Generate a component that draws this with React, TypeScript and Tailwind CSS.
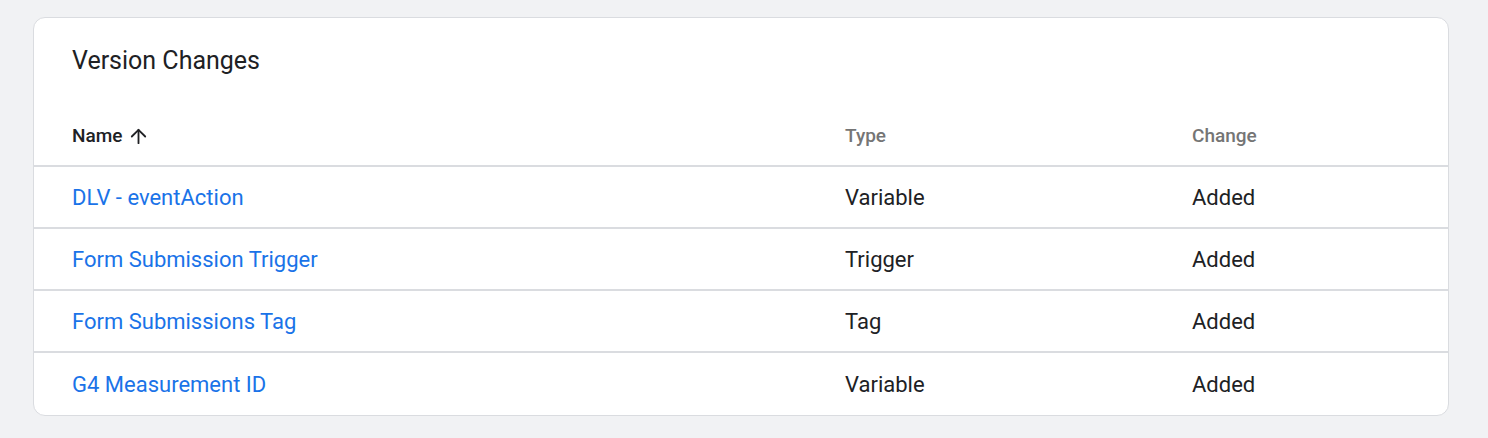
import { ArrowUp } from 'lucide-react'

const rows = [
  { name: 'DLV - eventAction', type: 'Variable', change: 'Added' },
  { name: 'Form Submission Trigger', type: 'Trigger', change: 'Added' },
  { name: 'Form Submissions Tag', type: 'Tag', change: 'Added' },
  { name: 'G4 Measurement ID', type: 'Variable', change: 'Added' },
]

export default function App() {
  return (
    <div className="min-h-screen bg-[#f1f2f4] pt-[17px] pl-[33px] pr-[39px]" style={{ fontFamily: 'Roboto, "Liberation Sans", sans-serif' }}>
      <div className="w-[1416px] overflow-hidden rounded-[12px] border border-[#dadce0] bg-white">
        <h2 className="mt-[27px] pl-[38px] text-[25px] leading-[32px] font-normal text-[#202124]">Version Changes</h2>

        <div className="mt-[30px] grid h-[60px] grid-cols-[773px_347px_1fr] items-center border-b-2 border-[#dadce0] pl-[38px] text-[19px] font-medium">
          <div className="flex items-center gap-[5px] text-[#202124]">
            <span>Name</span>
            <ArrowUp className="h-[23px] w-[23px]" strokeWidth={1.9} />
          </div>
          <div className="text-[#757575]">Type</div>
          <div className="text-[#757575]">Change</div>
        </div>

        {rows.map((row, i) => (
          <div
            key={row.name}
            className={`grid h-[62px] grid-cols-[773px_347px_1fr] items-center pl-[38px] text-[22px] ${i < rows.length - 1 ? 'border-b-2 border-[#dadce0]' : ''}`}
          >
            <a className="text-[#1a73e8]">{row.name}</a>
            <div className="text-[#202124]">{row.type}</div>
            <div className="text-[#202124]">{row.change}</div>
          </div>
        ))}
      </div>
    </div>
  )
}
